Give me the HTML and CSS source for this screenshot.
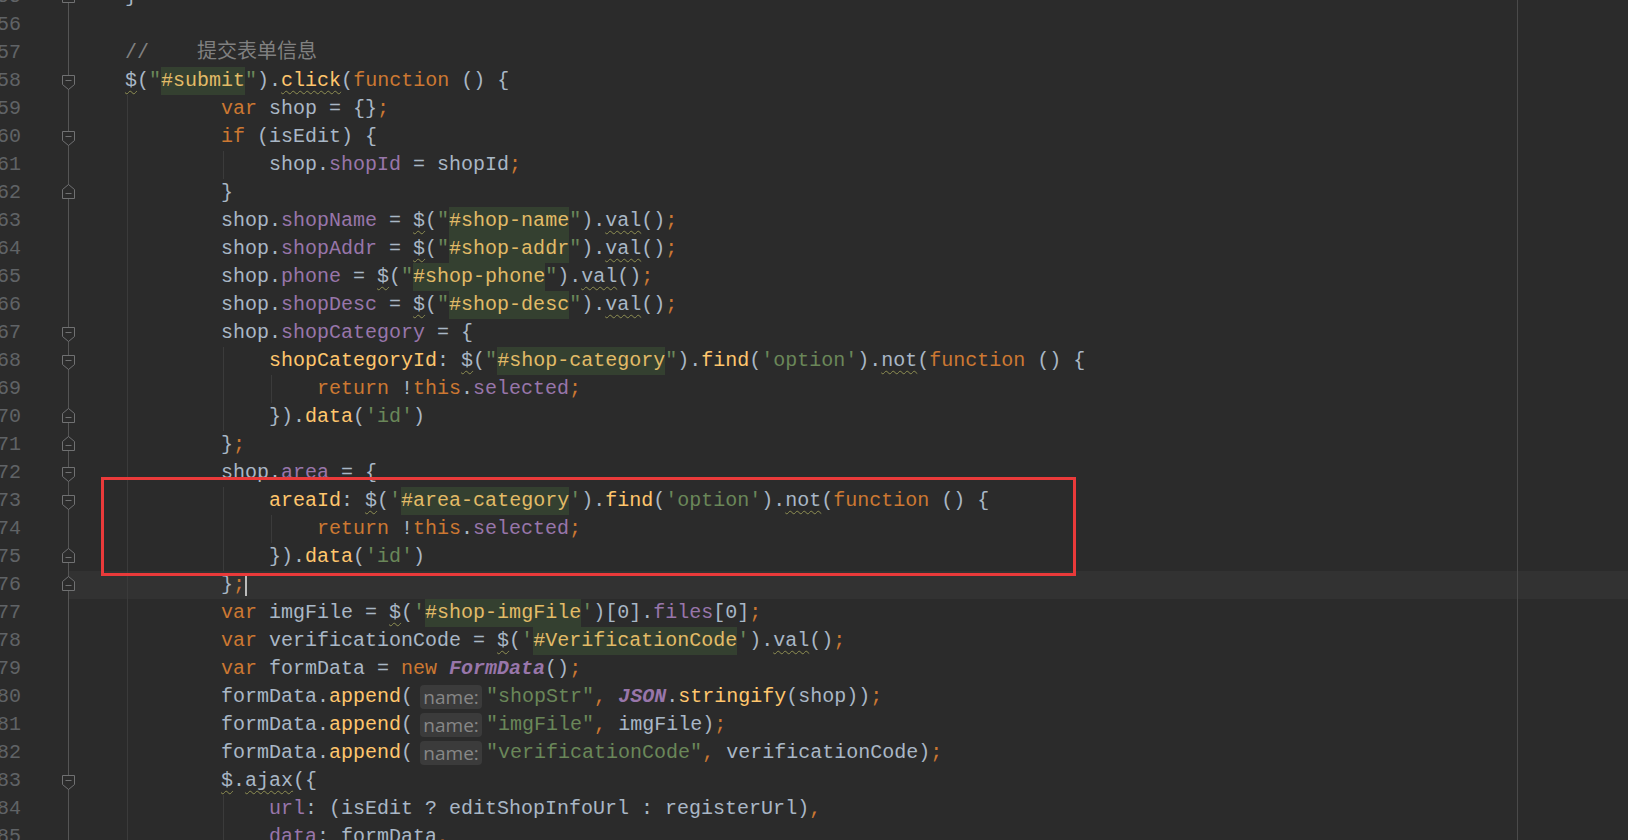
FILE: index.html
```html
<!DOCTYPE html>
<html lang="zh">
<head>
<meta charset="utf-8">
<title>editor</title>
<link rel="stylesheet" href="styles.css">
</head>
<body>
<div class="editor">
  <div class="row"><span class="ln">55</span><span class="fold"><svg class="mk up" viewBox="0 0 13 15"><path d="M6.5 0.5L12.5 5.5V14.5H0.5V5.5Z"/><path d="M3.5 9.5H9.5"/></svg></span><span class="code">}</span></div>
  <div class="row"><span class="ln">56</span><span class="fold"></span><span class="code"></span></div>
  <div class="row"><span class="ln">57</span><span class="fold"></span><span class="code"><span class="c">//    提交表单信息</span></span></div>
  <div class="row"><span class="ln">58</span><span class="fold"><svg class="mk dn" viewBox="0 0 13 15"><path d="M0.5 0.5H12.5V9.5L6.5 14.5L0.5 9.5Z"/><path d="M3.5 5.5H9.5"/></svg></span><span class="code"><span class="w">$</span>(<span class="s">"</span><span class="inj">#submit</span><span class="s">"</span>).<span class="f w">click</span>(<span class="k">function</span> () {</span></div>
  <div class="row"><span class="ln">59</span><span class="fold"></span><span class="code g1">        <span class="k">var</span> shop = {}<span class="k">;</span></span></div>
  <div class="row"><span class="ln">60</span><span class="fold"><svg class="mk dn" viewBox="0 0 13 15"><path d="M0.5 0.5H12.5V9.5L6.5 14.5L0.5 9.5Z"/><path d="M3.5 5.5H9.5"/></svg></span><span class="code g1">        <span class="k">if</span> (isEdit) {</span></div>
  <div class="row"><span class="ln">61</span><span class="fold"></span><span class="code g1 g2">            shop.<span class="p">shopId</span> = shopId<span class="k">;</span></span></div>
  <div class="row"><span class="ln">62</span><span class="fold"><svg class="mk up" viewBox="0 0 13 15"><path d="M6.5 0.5L12.5 5.5V14.5H0.5V5.5Z"/><path d="M3.5 9.5H9.5"/></svg></span><span class="code g1">        }</span></div>
  <div class="row"><span class="ln">63</span><span class="fold"></span><span class="code g1">        shop.<span class="p">shopName</span> = <span class="w">$</span>(<span class="s">"</span><span class="inj">#shop-name</span><span class="s">"</span>).<span class="w">val</span>()<span class="k">;</span></span></div>
  <div class="row"><span class="ln">64</span><span class="fold"></span><span class="code g1">        shop.<span class="p">shopAddr</span> = <span class="w">$</span>(<span class="s">"</span><span class="inj">#shop-addr</span><span class="s">"</span>).<span class="w">val</span>()<span class="k">;</span></span></div>
  <div class="row"><span class="ln">65</span><span class="fold"></span><span class="code g1">        shop.<span class="p">phone</span> = <span class="w">$</span>(<span class="s">"</span><span class="inj">#shop-phone</span><span class="s">"</span>).<span class="w">val</span>()<span class="k">;</span></span></div>
  <div class="row"><span class="ln">66</span><span class="fold"></span><span class="code g1">        shop.<span class="p">shopDesc</span> = <span class="w">$</span>(<span class="s">"</span><span class="inj">#shop-desc</span><span class="s">"</span>).<span class="w">val</span>()<span class="k">;</span></span></div>
  <div class="row"><span class="ln">67</span><span class="fold"><svg class="mk dn" viewBox="0 0 13 15"><path d="M0.5 0.5H12.5V9.5L6.5 14.5L0.5 9.5Z"/><path d="M3.5 5.5H9.5"/></svg></span><span class="code g1">        shop.<span class="p">shopCategory</span> = {</span></div>
  <div class="row"><span class="ln">68</span><span class="fold"><svg class="mk dn" viewBox="0 0 13 15"><path d="M0.5 0.5H12.5V9.5L6.5 14.5L0.5 9.5Z"/><path d="M3.5 5.5H9.5"/></svg></span><span class="code g1 g2">            <span class="f">shopCategoryId</span>: <span class="w">$</span>(<span class="s">"</span><span class="inj">#shop-category</span><span class="s">"</span>).<span class="f">find</span>(<span class="s">'option'</span>).<span class="w">not</span>(<span class="k">function</span> () {</span></div>
  <div class="row"><span class="ln">69</span><span class="fold"></span><span class="code g1 g2 g3">                <span class="k">return</span> !<span class="k">this</span>.<span class="p">selected</span><span class="k">;</span></span></div>
  <div class="row"><span class="ln">70</span><span class="fold"><svg class="mk up" viewBox="0 0 13 15"><path d="M6.5 0.5L12.5 5.5V14.5H0.5V5.5Z"/><path d="M3.5 9.5H9.5"/></svg></span><span class="code g1 g2">            }).<span class="f">data</span>(<span class="s">'id'</span>)</span></div>
  <div class="row"><span class="ln">71</span><span class="fold"><svg class="mk up" viewBox="0 0 13 15"><path d="M6.5 0.5L12.5 5.5V14.5H0.5V5.5Z"/><path d="M3.5 9.5H9.5"/></svg></span><span class="code g1">        }<span class="k">;</span></span></div>
  <div class="row"><span class="ln">72</span><span class="fold"><svg class="mk dn" viewBox="0 0 13 15"><path d="M0.5 0.5H12.5V9.5L6.5 14.5L0.5 9.5Z"/><path d="M3.5 5.5H9.5"/></svg></span><span class="code g1">        shop.<span class="p">area</span> = {</span></div>
  <div class="row"><span class="ln">73</span><span class="fold"><svg class="mk dn" viewBox="0 0 13 15"><path d="M0.5 0.5H12.5V9.5L6.5 14.5L0.5 9.5Z"/><path d="M3.5 5.5H9.5"/></svg></span><span class="code g1 g2">            <span class="f">areaId</span>: <span class="w">$</span>(<span class="s">'</span><span class="inj">#area-category</span><span class="s">'</span>).<span class="f">find</span>(<span class="s">'option'</span>).<span class="w">not</span>(<span class="k">function</span> () {</span></div>
  <div class="row"><span class="ln">74</span><span class="fold"></span><span class="code g1 g2 g3">                <span class="k">return</span> !<span class="k">this</span>.<span class="p">selected</span><span class="k">;</span></span></div>
  <div class="row"><span class="ln">75</span><span class="fold"><svg class="mk up" viewBox="0 0 13 15"><path d="M6.5 0.5L12.5 5.5V14.5H0.5V5.5Z"/><path d="M3.5 9.5H9.5"/></svg></span><span class="code g1 g2">            }).<span class="f">data</span>(<span class="s">'id'</span>)</span></div>
  <div class="row cur"><span class="ln curln">76</span><span class="fold"><svg class="mk up" viewBox="0 0 13 15"><path d="M6.5 0.5L12.5 5.5V14.5H0.5V5.5Z"/><path d="M3.5 9.5H9.5"/></svg></span><span class="code g1">        }<span class="k">;</span><span class="caret"></span></span></div>
  <div class="row"><span class="ln">77</span><span class="fold"></span><span class="code g1">        <span class="k">var</span> imgFile = <span class="w">$</span>(<span class="s">'</span><span class="inj">#shop-imgFile</span><span class="s">'</span>)[0].<span class="p">files</span>[0]<span class="k">;</span></span></div>
  <div class="row"><span class="ln">78</span><span class="fold"></span><span class="code g1">        <span class="k">var</span> verificationCode = <span class="w">$</span>(<span class="s">'</span><span class="inj">#VerificationCode</span><span class="s">'</span>).<span class="w">val</span>()<span class="k">;</span></span></div>
  <div class="row"><span class="ln">79</span><span class="fold"></span><span class="code g1">        <span class="k">var</span> formData = <span class="k">new</span> <span class="bi">FormData</span>()<span class="k">;</span></span></div>
  <div class="row"><span class="ln">80</span><span class="fold"></span><span class="code g1">        formData.<span class="f">append</span>(<span class="hint">name:</span><span class="s">"shopStr"</span><span class="k">,</span> <span class="bi">JSON</span>.<span class="f">stringify</span>(shop))<span class="k">;</span></span></div>
  <div class="row"><span class="ln">81</span><span class="fold"></span><span class="code g1">        formData.<span class="f">append</span>(<span class="hint">name:</span><span class="s">"imgFile"</span><span class="k">,</span> imgFile)<span class="k">;</span></span></div>
  <div class="row"><span class="ln">82</span><span class="fold"></span><span class="code g1">        formData.<span class="f">append</span>(<span class="hint">name:</span><span class="s">"verificationCode"</span><span class="k">,</span> verificationCode)<span class="k">;</span></span></div>
  <div class="row"><span class="ln">83</span><span class="fold"><svg class="mk dn" viewBox="0 0 13 15"><path d="M0.5 0.5H12.5V9.5L6.5 14.5L0.5 9.5Z"/><path d="M3.5 5.5H9.5"/></svg></span><span class="code g1">        <span class="w">$</span>.<span class="w">ajax</span>({</span></div>
  <div class="row"><span class="ln">84</span><span class="fold"></span><span class="code g1 g2">            <span class="p">url</span>: (isEdit ? editShopInfoUrl : registerUrl)<span class="k">,</span></span></div>
  <div class="row"><span class="ln">85</span><span class="fold"></span><span class="code g1 g2">            <span class="p">data</span>: formData<span class="k">,</span></span></div>
</div>
<div class="redbox"></div>
</body>
</html>
```

FILE: styles.css
```css
html, body {
  margin: 0;
  padding: 0;
  background: #2b2b2b;
  width: 1628px;
  height: 840px;
  overflow: hidden;
}

.editor {
  margin-top: -17px;
  font-family: "Liberation Mono", "Noto Sans CJK SC", monospace;
  font-size: 20px;
  color: #a9b7c6;
}

.row {
  display: flex;
  height: 28px;
  line-height: 28px;
}

.ln {
  flex: none;
  width: 24px;
  margin-left: -3px;
  text-align: right;
  color: #606366;
}

.fold {
  flex: none;
  width: 104px;
  box-sizing: border-box;
  padding-left: 41px;
  display: flex;
  align-items: center;
  background: linear-gradient(to right, transparent 47px, #555555 47px, #555555 48px, transparent 48px);
}

.cur .fold {
  background:
    linear-gradient(to right, transparent 47px, #555555 47px, #555555 48px, transparent 48px),
    linear-gradient(to right, transparent 47px, #323232 47px);
}

.mk {
  width: 13px;
  height: 15px;
  fill: #2b2b2b;
  stroke: #707172;
  stroke-width: 1;
}

.mk.dn { margin-top: 2px; }
.mk.up { margin-top: -4px; }

.code {
  flex: 1;
  white-space: pre;
  --rm: linear-gradient(to right, transparent 1392px, #4a4a4a 1392px, #4a4a4a 1393px, transparent 1393px);
  background-image: var(--g1, none), var(--g2, none), var(--g3, none), var(--rm);
}

.g1 { --g1: linear-gradient(to right, transparent 2px, #3b3b3b 2px, #3b3b3b 3px, transparent 3px); }
.g2 { --g2: linear-gradient(to right, transparent 98px, #3b3b3b 98px, #3b3b3b 99px, transparent 99px); }
.g3 { --g3: linear-gradient(to right, transparent 146px, #3b3b3b 146px, #3b3b3b 147px, transparent 147px); }

.cur .code { background-color: #323232; }

.k { color: #cc7832; }
.s { color: #6a8759; }
.p { color: #9876aa; }
.f { color: #ffc66d; }
.c { color: #808080; }
.bi { color: #9876aa; font-weight: bold; font-style: italic; }

.inj {
  display: inline-block;
  height: 28px;
  vertical-align: top;
  background: #344030;
  color: #e2bb67;
}

.w {
  text-decoration-line: underline;
  text-decoration-style: wavy;
  text-decoration-color: #8f8f52;
  text-decoration-thickness: 1px;
  text-underline-offset: 4px;
}

.hint {
  display: inline-block;
  vertical-align: top;
  box-sizing: border-box;
  width: 62px;
  height: 24px;
  margin: 2px 4px 0 7px;
  padding: 0 3px;
  border-radius: 4px;
  background: #3b3b3b;
  color: #878787;
  font-family: "Open Sans", "Liberation Sans", sans-serif;
  font-size: 19px;
  line-height: 24px;
  text-align: center;
}

.caret {
  display: inline-block;
  width: 2px;
  height: 20px;
  margin-top: 5px;
  vertical-align: top;
  background: #bbbbbb;
}

.redbox {
  position: absolute;
  left: 101px;
  top: 477px;
  width: 975px;
  height: 99px;
  box-sizing: border-box;
  border: 3px solid #ea3a3a;
}
```
